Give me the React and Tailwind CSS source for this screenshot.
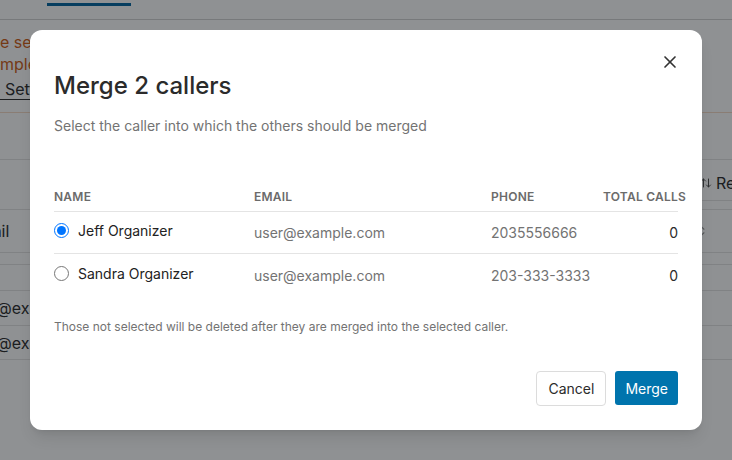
import React from 'react';
import { X, ArrowUpDown, ChevronsUpDown } from 'lucide-react';

const callers = [
  { name: 'Jeff Organizer', email: 'user@example.com', phone: '2035556666', calls: 0, selected: true },
  { name: 'Sandra Organizer', email: 'user@example.com', phone: '203-333-3333', calls: 0, selected: false },
];

const BackgroundPage = () => (
  <div className="w-full">
    {/* tabs */}
    <div className="h-[20px] border-b border-[#d4d4d4] flex">
      <div className="ml-[47px] mt-[3px] w-[84px] h-[3px] bg-[#0b6aa3]" />
    </div>

    {/* warning box */}
    <div className="pt-[11px] pb-[12px] border-b border-[#f6dcc8] text-[16px] leading-[22px] text-[#d0651f] whitespace-nowrap">
      <div>e settings for this account</div>
      <div>mple data</div>
      <div className="mt-[3px] text-[#333]">
        <span className="border-b border-[#333] pl-[5px]">Settings</span>
      </div>
    </div>

    {/* toolbar */}
    <div className="mt-[46px] border-t border-[#e5e5e5] h-[50px] flex">
      <div className="ml-[700px] mt-[6px] h-[35px] border-b border-[#e5e5e5] flex items-center gap-[4px] text-[16px] text-[#333] whitespace-nowrap">
        <ArrowUpDown size={12} className="text-[#555]" />
        <span>Reset</span>
      </div>
    </div>

    {/* table head */}
    <div className="border-t border-[#e5e5e5] h-[44px] flex items-center justify-between text-[16px] text-[#333] border-b">
      <span className="-ml-[31px]">Email</span>
      <ChevronsUpDown size={14} className="mr-[24px] text-[#999]" />
    </div>
    <div className="h-[11px]" />
    <div className="border-t border-[#e5e5e5] h-[26px]" />
    <div className="border-t border-[#e5e5e5] h-[35px] flex items-center text-[16px] text-[#333]">
      <span className="-ml-[37px]">user@example.com</span>
    </div>
    <div className="border-t border-[#e5e5e5] h-[35px] flex items-center text-[16px] text-[#333] border-b">
      <span className="-ml-[37px]">user@example.com</span>
    </div>
  </div>
);

const MergeDialog = () => (
  <div className="w-[672px] h-[400px] bg-white rounded-xl shadow-lg px-6 pt-[40px] pb-6 flex flex-col">
    <div className="flex items-start justify-between">
      <h2 className="text-[24px] leading-[32px] font-medium text-[#2b2b2b]">Merge 2 callers</h2>
      <button className="-mt-[18px] -mr-[2px] text-[#333]">
        <X size={20} strokeWidth={2} />
      </button>
    </div>
    <p className="mt-[14px] text-[14px] leading-[20px] text-[#737373]">
      Select the caller into which the others should be merged
    </p>

    <div className="mt-[46px]">
      <div className="grid grid-cols-[200px_237px_112px_75px] h-[30px] items-center border-b border-[#e4e4e4] text-[12px] font-semibold tracking-[0.02em] text-[#6b6b6b] uppercase">
        <span>Name</span>
        <span>Email</span>
        <span>Phone</span>
        <span className="whitespace-nowrap">Total Calls</span>
      </div>
      {callers.map((c, i) => (
        <div
          key={c.name}
          className={`grid grid-cols-[200px_237px_112px_75px] h-[42px] items-center text-[14px] ${
            i === 0 ? 'border-b border-[#e4e4e4]' : ''
          }`}
        >
          <label className="flex items-center gap-[9px] pb-[4px]">
            <input
              type="radio"
              name="target"
              defaultChecked={c.selected}
              className="w-[15px] h-[15px] m-0 accent-[#0075ff]"
            />
            <span className="text-[#222]">{c.name}</span>
          </label>
          <span className="text-[#737373]">{c.email}</span>
          <span className="text-[#737373]">{c.phone}</span>
          <span className="text-right text-[#2b2b2b]">{c.calls}</span>
        </div>
      ))}
    </div>

    <p className="mt-[23px] text-[12px] leading-[16px] text-[#737373]">
      Those not selected will be deleted after they are merged into the selected caller.
    </p>

    <div className="mt-auto flex justify-end gap-[9px]">
      <button className="h-[35px] px-[11px] rounded border border-[#dcdcdc] bg-white text-[14px] text-[#2b2b2b]">
        Cancel
      </button>
      <button className="h-[34px] px-[10px] rounded-[3px] bg-[#0074ad] text-[14px] text-white">
        Merge
      </button>
    </div>
  </div>
);

export default function App() {
  return (
    <div
      className="relative w-full h-[460px] overflow-hidden bg-white"
      style={{ fontFamily: 'Inter, "Noto Sans", sans-serif' }}
    >
      <BackgroundPage />
      <div className="absolute inset-0 bg-[rgba(0,5,10,0.44)] flex items-center justify-center">
        <MergeDialog />
      </div>
    </div>
  );
}
